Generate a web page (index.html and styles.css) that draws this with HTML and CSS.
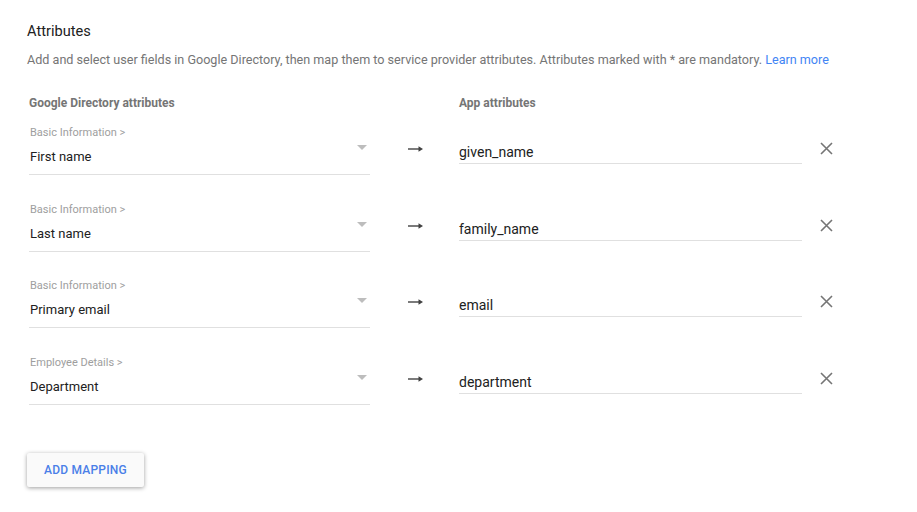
FILE: index.html
```html
<!DOCTYPE html>
<html>
<head>
<meta charset="utf-8">
<link rel="stylesheet" href="styles.css">
</head>
<body>
<div class="page">
  <h1 class="title">Attributes</h1>
  <p class="desc">Add and select user fields in Google Directory, then map them to service provider attributes. Attributes marked with * are mandatory. <a class="link" href="#">Learn more</a></p>

  <div class="grid">
    <div class="colhead">Google Directory attributes</div>
    <div></div>
    <div class="colhead">App attributes</div>
    <div></div>

    <div class="select">
      <div class="sel-text"><div class="sel-label">Basic Information &gt;</div><div class="sel-value">First name</div></div>
      <span class="tri"></span>
    </div>
    <div class="arrow"><svg width="15" height="8" viewBox="0 0 15 8"><path d="M0 4H12" stroke="#424242" stroke-width="1.4"/><path d="M10.5 1.2L15 4L10.5 6.8Z" fill="#424242"/></svg></div>
    <div class="app">given_name</div>
    <div class="close"><svg width="13" height="13" viewBox="0 0 13 13"><path d="M1 1L12 12M12 1L1 12" stroke="#757575" stroke-width="1.6"/></svg></div>

    <div class="select">
      <div class="sel-text"><div class="sel-label">Basic Information &gt;</div><div class="sel-value">Last name</div></div>
      <span class="tri"></span>
    </div>
    <div class="arrow"><svg width="15" height="8" viewBox="0 0 15 8"><path d="M0 4H12" stroke="#424242" stroke-width="1.4"/><path d="M10.5 1.2L15 4L10.5 6.8Z" fill="#424242"/></svg></div>
    <div class="app">family_name</div>
    <div class="close"><svg width="13" height="13" viewBox="0 0 13 13"><path d="M1 1L12 12M12 1L1 12" stroke="#757575" stroke-width="1.6"/></svg></div>

    <div class="select">
      <div class="sel-text"><div class="sel-label">Basic Information &gt;</div><div class="sel-value">Primary email</div></div>
      <span class="tri"></span>
    </div>
    <div class="arrow"><svg width="15" height="8" viewBox="0 0 15 8"><path d="M0 4H12" stroke="#424242" stroke-width="1.4"/><path d="M10.5 1.2L15 4L10.5 6.8Z" fill="#424242"/></svg></div>
    <div class="app">email</div>
    <div class="close"><svg width="13" height="13" viewBox="0 0 13 13"><path d="M1 1L12 12M12 1L1 12" stroke="#757575" stroke-width="1.6"/></svg></div>

    <div class="select">
      <div class="sel-text"><div class="sel-label">Employee Details &gt;</div><div class="sel-value">Department</div></div>
      <span class="tri"></span>
    </div>
    <div class="arrow"><svg width="15" height="8" viewBox="0 0 15 8"><path d="M0 4H12" stroke="#424242" stroke-width="1.4"/><path d="M10.5 1.2L15 4L10.5 6.8Z" fill="#424242"/></svg></div>
    <div class="app">department</div>
    <div class="close"><svg width="13" height="13" viewBox="0 0 13 13"><path d="M1 1L12 12M12 1L1 12" stroke="#757575" stroke-width="1.6"/></svg></div>
  </div>

  <button class="btn">ADD MAPPING</button>
</div>
</body>
</html>
```

FILE: styles.css
```css
* { box-sizing: border-box; }
html, body { margin: 0; padding: 0; background: #fff; }
body { font-family: Roboto, "Liberation Sans", Arial, sans-serif; color: #212121; }
.page { padding: 21px 27px 20px 27px; }
.title { margin: 0; font-size: 14.6px; line-height: 20px; font-weight: 400; color: #212121; }
.desc { margin: 9px 0 0 0; font-size: 12.6px; line-height: 20px; color: #757575; }
.link { color: #4285f4; text-decoration: none; }
.grid {
  margin: 25px 0 0 2px;
  display: grid;
  grid-template-columns: 341px 89px 343px auto;
  row-gap: 27.7px;
  align-items: start;
}
.colhead { font-size: 12px; line-height: 16px; font-weight: 700; color: #757575; margin-bottom: -12.7px; }
.select { display: flex; align-items: flex-start; border-bottom: 1px solid #e0e0e0; padding: 0 3px 7px 1px; height: 49px; }
.sel-text { flex: 1; }
.sel-label { font-size: 11px; line-height: 14px; color: #9e9e9e; }
.sel-value { margin-top: 7px; font-size: 13px; line-height: 20px; color: #212121; }
.tri { width: 0; height: 0; border-left: 5.5px solid transparent; border-right: 5.5px solid transparent; border-top: 5px solid #bdbdbd; margin-top: 19px; }
.arrow { padding-left: 38px; margin-top: 19px; display: flex; }
.app { margin-top: 16px; font-size: 14px; line-height: 20px; color: #212121; border-bottom: 1px solid #e0e0e0; height: 22px; }
.close { margin-top: 16px; margin-left: 18px; display: flex; }
.btn {
  margin-top: 48px;
  display: block;
  width: 117px; height: 34px;
  border: none; border-radius: 2px;
  background: #fafafa;
  box-shadow: 0 1px 4px rgba(0,0,0,0.38);
  font-family: Roboto, "Liberation Sans", Arial, sans-serif;
  font-size: 12px; font-weight: 500; letter-spacing: 0.2px;
  color: #4a7fe8; padding: 0;
}
```
